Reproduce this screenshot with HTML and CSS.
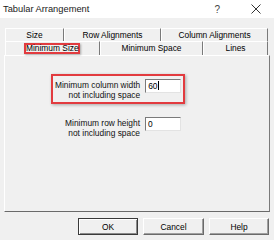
FILE: index.html
```html
<!DOCTYPE html>
<html lang="en">
<head>
  <meta charset="UTF-8">
  <title>Tabular Arrangement</title>
  <link rel="stylesheet" href="styles.css">
</head>
<body>
  <div class="window">
    <div class="titlebar">
      <span class="title">Tabular Arrangement</span>
      <span class="help-mark">?</span>
      <svg class="close" width="10" height="10" viewBox="0 0 10 10">
        <path d="M0.5 0.5 L9.5 9.5 M9.5 0.5 L0.5 9.5" stroke="#333" stroke-width="1" fill="none"/>
      </svg>
    </div>

    <div class="tabs">
      <div class="tab-row">
        <div class="tab tab-size">Size</div>
        <div class="tab tab-row-align">Row Alignments</div>
        <div class="tab tab-col-align">Column Alignments</div>
      </div>
      <div class="tab-row">
        <div class="tab tab-min-size"><span class="mark">Minimum Size</span></div>
        <div class="tab tab-min-space">Minimum Space</div>
        <div class="tab tab-lines">Lines</div>
      </div>
    </div>

    <div class="panel">
      <div class="field marked">
        <label class="field-label">Minimum column width<br>not including space</label>
        <div class="input">60<span class="caret"></span></div>
      </div>
      <div class="field">
        <label class="field-label">Minimum row height<br>not including space</label>
        <div class="input">0</div>
      </div>
    </div>

    <div class="buttons">
      <button class="btn btn-default">OK</button>
      <button class="btn btn-cancel">Cancel</button>
      <button class="btn">Help</button>
    </div>
  </div>
</body>
</html>
```

FILE: styles.css
```css
* {
  box-sizing: border-box;
}

body {
  margin: 0;
  padding: 0;
  background-color: #f0f0f0;
  font-family: "Liberation Sans", Arial, sans-serif;
  font-size: 8.4px;
  color: #000;
}

.window {
  width: 274px;
  height: 240px;
  overflow: hidden;
}

.titlebar {
  height: 18px;
  background-color: #fff;
  display: flex;
  align-items: center;
  padding: 0 13px 0 3px;
}

.title {
  font-size: 9.3px;
  color: #1a1a1a;
  flex: 1;
}

.help-mark {
  font-size: 10px;
  color: #444;
  margin-right: 31px;
}

.close {
  display: block;
}

.tabs {
  margin: 10px 0 0 5px;
}

.tab-row {
  display: flex;
}

.tab {
  height: 13px;
  padding-top: 1px;
  line-height: 11px;
  text-align: center;
  border-top: 1px solid #fff;
  border-left: 1px solid #fff;
  border-right: 1px solid #7a7a7a;
  white-space: nowrap;
}

.tab-row + .tab-row .tab {
  height: 14px;
}

.tab-size { width: 59px; }
.tab-row-align { width: 97px; }
.tab-col-align { width: 107px; }
.tab-min-size { width: 95px; }
.tab-min-space { width: 103px; }
.tab-lines { width: 65px; }

.mark {
  display: block;
  width: 56px;
  margin: 0 0 0 18px;
  line-height: 7px;
  border: 2px solid #e23b3f;
  box-shadow: 1px 1px 2px rgba(0,0,0,0.3);
  text-align: center;
}

.panel {
  margin: 0 4px 0 4px;
  height: 157px;
  border-top: 1px solid #fff;
  border-left: 1px solid #fff;
  border-right: 1px solid #7a7a7a;
  border-bottom: 1px solid #6a6a6a;
  padding-top: 18px;
}

.field {
  display: flex;
  gap: 5px;
  width: 134px;
  margin-left: 46px;
  border: 2px solid transparent;
  padding: 3px 2px 2px;
}

.field + .field {
  margin-top: 8px;
}

.field.marked {
  border-color: #e23b3f;
  box-shadow: 1px 1px 3px rgba(0,0,0,0.3);
}

.field-label {
  flex: 1;
  text-align: right;
  line-height: 10px;
  padding-top: 1px;
  white-space: nowrap;
  color: #111;
}

.input {
  flex: none;
  width: 36px;
  height: 14px;
  background-color: #fff;
  border-top: 1px solid #7a7a7a;
  border-left: 1px solid #7a7a7a;
  border-right: 1px solid #e3e3e3;
  border-bottom: 1px solid #e3e3e3;
  padding: 1px 2px;
  line-height: 11px;
}

.caret {
  display: inline-block;
  width: 1px;
  height: 9px;
  background-color: #000;
  vertical-align: -1px;
}

.buttons {
  display: flex;
  justify-content: flex-end;
  gap: 5px;
  margin: 6px 5px 0 0;
}

.btn {
  width: 60px;
  height: 17px;
  padding: 0;
  font-family: "Liberation Sans", Arial, sans-serif;
  font-size: 8.4px;
  color: #000;
  background-color: #f0f0f0;
  border: 1px solid;
  border-color: #fff #6a6a6a #6a6a6a #fff;
  box-shadow: inset -1px -1px #a0a0a0;
}

.btn-cancel {
  width: 61px;
}

.btn-default {
  border: 1px solid #3a3a3a;
  box-shadow: inset 1px 1px #fff, inset -1px -1px #8a8a8a;
}
```
